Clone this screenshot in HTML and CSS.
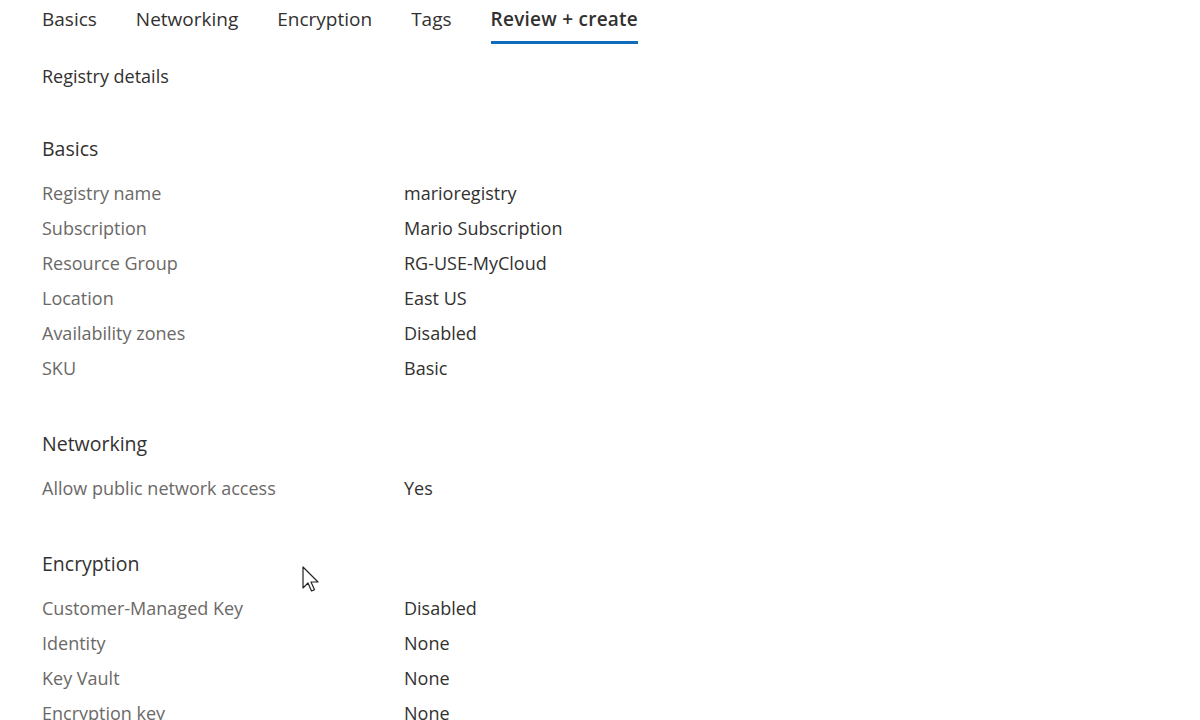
FILE: index.html
```html
<!DOCTYPE html>
<html>
<head>
<meta charset="utf-8">
<link rel="stylesheet" href="styles.css">
</head>
<body>
<div class="page">
  <nav class="tabs">
    <span class="tab">Basics</span>
    <span class="tab">Networking</span>
    <span class="tab">Encryption</span>
    <span class="tab">Tags</span>
    <span class="tab active">Review + create</span>
  </nav>
  <div class="title">Registry details</div>

  <section class="section">
    <div class="heading">Basics</div>
    <div class="rows">
      <div class="label">Registry name</div><div class="value">marioregistry</div>
      <div class="label">Subscription</div><div class="value">Mario Subscription</div>
      <div class="label">Resource Group</div><div class="value">RG-USE-MyCloud</div>
      <div class="label">Location</div><div class="value">East US</div>
      <div class="label">Availability zones</div><div class="value">Disabled</div>
      <div class="label">SKU</div><div class="value">Basic</div>
    </div>
  </section>

  <section class="section">
    <div class="heading">Networking</div>
    <div class="rows">
      <div class="label">Allow public network access</div><div class="value">Yes</div>
    </div>
  </section>

  <section class="section">
    <div class="heading">Encryption</div>
    <div class="rows">
      <div class="label">Customer-Managed Key</div><div class="value">Disabled</div>
      <div class="label">Identity</div><div class="value">None</div>
      <div class="label">Key Vault</div><div class="value">None</div>
      <div class="label">Encryption key</div><div class="value">None</div>
    </div>
  </section>
</div>
<svg class="cursor" width="20" height="30" viewBox="0 0 20 30">
  <path d="M1 1 L1 22 L6 17 L9.5 25 L12.5 23.8 L9 16 L16 16 Z" fill="#fff" stroke="#222" stroke-width="1.2" stroke-linejoin="round"/>
</svg>
</body>
</html>
```
FILE: styles.css
```css
html, body {
  margin: 0;
  padding: 0;
  background: #ffffff;
  overflow: hidden;
}
body {
  font-family: "Open Sans", "Noto Sans", sans-serif;
  font-size: 18px;
  color: #323130;
  width: 1200px;
  height: 720px;
  position: relative;
}
.page {
  padding-left: 42px;
}
.tabs {
  display: flex;
  gap: 39px;
  height: 44px;
}
.tab {
  font-size: 19px;
  line-height: 35px;
  padding-top: 2px;
  color: #323130;
  height: 39px;
  box-sizing: content-box;
}
.tab.active {
  font-weight: 600;
  letter-spacing: 0.25px;
  border-bottom: 3px solid #0f6cbd;
}
.title {
  line-height: 35px;
  margin-top: 15px;
}
.section {
  margin-top: 37px;
}
.section + .section {
  margin-top: 40px;
}
.heading {
  line-height: 35px;
  font-size: 19.5px;
  margin-bottom: 10px;
}
.rows {
  display: grid;
  grid-template-columns: 362px 1fr;
}
.label, .value {
  line-height: 35px;
}
.label {
  color: #6b6967;
}
.value {
  color: #323130;
}
.cursor {
  position: absolute;
  left: 302px;
  top: 566px;
}
```
